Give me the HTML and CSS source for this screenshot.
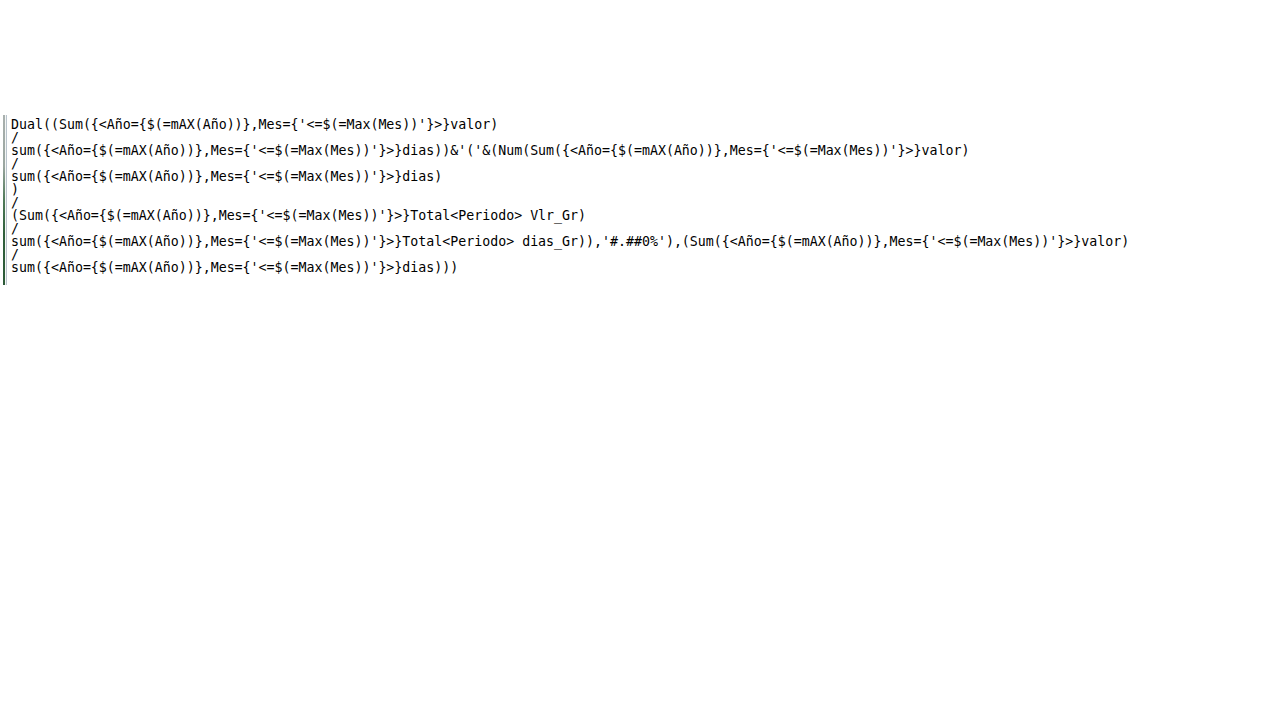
FILE: index.html
```html
<!DOCTYPE html>
<html>
<head>
<meta charset="utf-8">
<link rel="stylesheet" href="styles.css">
</head>
<body>
<div class="page">
  <div class="editor">
    <div class="gutter"><div class="bar"></div><div class="gap"></div><div class="line"></div></div>
    <pre class="code">Dual((Sum({&lt;Año={$(=mAX(Año))},Mes={'&lt;=$(=Max(Mes))'}&gt;}valor)
/
sum({&lt;Año={$(=mAX(Año))},Mes={'&lt;=$(=Max(Mes))'}&gt;}dias))&amp;'('&amp;(Num(Sum({&lt;Año={$(=mAX(Año))},Mes={'&lt;=$(=Max(Mes))'}&gt;}valor)
/
sum({&lt;Año={$(=mAX(Año))},Mes={'&lt;=$(=Max(Mes))'}&gt;}dias)
)
/
(Sum({&lt;Año={$(=mAX(Año))},Mes={'&lt;=$(=Max(Mes))'}&gt;}Total&lt;Periodo&gt; Vlr_Gr)
/
sum({&lt;Año={$(=mAX(Año))},Mes={'&lt;=$(=Max(Mes))'}&gt;}Total&lt;Periodo&gt; dias_Gr)),'#.##0%'),(Sum({&lt;Año={$(=mAX(Año))},Mes={'&lt;=$(=Max(Mes))'}&gt;}valor)
/
sum({&lt;Año={$(=mAX(Año))},Mes={'&lt;=$(=Max(Mes))'}&gt;}dias)))</pre>
  </div>
</div>
</body>
</html>
```

FILE: styles.css
```css
html, body {
  margin: 0;
  padding: 0;
  background: #ffffff;
}
.page {
  padding: 115px 0 0 3px;
}
.editor {
  display: flex;
  align-items: stretch;
}
.gutter {
  display: flex;
  height: 170px;
}
.bar {
  width: 2px;
  background: linear-gradient(to bottom, #a9b0ae 0%, #9aa6a0 30%, #4f7a58 50%, #2f5f3b 70%, #2c5a37 100%);
}
.gap {
  width: 1px;
  background: #f4f6f6;
}
.line {
  width: 1px;
  background: #b9c4cc;
}
.code {
  margin: 0 0 0 4px;
  padding: 3px 0 0 0;
  font-family: "DejaVu Sans Mono", "Liberation Mono", monospace;
  font-size: 13.28px;
  line-height: 13px;
  color: #000000;
  white-space: pre;
}
```
